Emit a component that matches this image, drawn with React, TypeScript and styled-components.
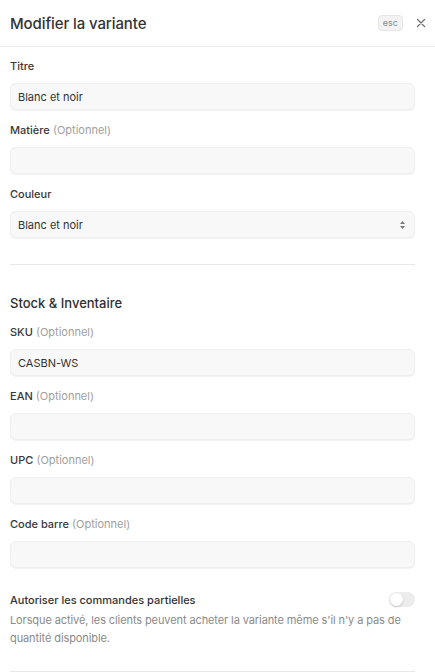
import React from "react";
import styled, { createGlobalStyle } from "styled-components";

const GlobalStyle = createGlobalStyle`
  * { box-sizing: border-box; }
  body {
    margin: 0;
    background: #ffffff;
    font-family: Inter, "Noto Sans", sans-serif;
    color: #2f2f2f;
    -webkit-font-smoothing: antialiased;
  }
`;

const Panel = styled.div`
  width: 435px;
  height: 672px;
  overflow: hidden;
  background: #fff;
`;

const Header = styled.header`
  height: 47px;
  display: flex;
  align-items: center;
  padding: 0 9px 0 10px;
  border-bottom: 1px solid #ececec;
`;

const Title = styled.h1`
  flex: 1;
  margin: 0;
  font-size: 15px;
  font-weight: 500;
  color: #333;
  letter-spacing: -0.1px;
`;

const Kbd = styled.span`
  font-size: 9px;
  color: #8a8a8a;
  background: #f3f3f3;
  border: 1px solid #e6e6e6;
  border-radius: 4px;
  padding: 1px 4px 2px;
  margin-right: 13px;
`;

const Close = styled.button`
  border: 0;
  background: none;
  padding: 0;
  width: 10px;
  height: 10px;
  display: flex;
  color: #6f6f6f;
`;

const Body = styled.div`
  padding: 12px 20px 0 10px;
`;

const Field = styled.div`
  margin-bottom: 13px;
`;

const Label = styled.label`
  display: block;
  font-size: 11px;
  line-height: 14px;
  font-weight: 500;
  color: #383838;
  margin-bottom: 10px;
`;

const Optional = styled.span`
  font-weight: 400;
  color: #a0a0a0;
`;

const Input = styled.div<{ $select?: boolean }>`
  height: 27px;
  display: flex;
  align-items: center;
  padding: 0 8px 0 7px;
  background: #f8f8f8;
  border: 1px solid #efefef;
  border-radius: 6px;
  box-shadow: 0 1px 1px rgba(0, 0, 0, 0.06);
  font-size: 11px;
  color: #333;
  justify-content: ${(p) => (p.$select ? "space-between" : "flex-start")};
`;

const Divider = styled.hr<{ $top: number }>`
  border: 0;
  border-top: 1px solid #e8e8e8;
  margin: ${(p) => p.$top}px 0 0;
`;

const SectionTitle = styled.h2`
  margin: 30px 0 14px;
  font-size: 13px;
  line-height: 16px;
  font-weight: 500;
  color: #2f2f2f;
`;

const ToggleRow = styled.div`
  margin-top: 24px;
`;

const ToggleHead = styled.div`
  display: flex;
  align-items: center;
  justify-content: space-between;
`;

const ToggleLabel = styled.span`
  font-size: 11px;
  line-height: 14px;
  font-weight: 500;
  color: #333;
`;

const Switch = styled.span`
  width: 26px;
  height: 15px;
  border-radius: 8px;
  background: #ececec;
  position: relative;
  &::after {
    content: "";
    position: absolute;
    left: 1px;
    top: 1px;
    width: 13px;
    height: 13px;
    border-radius: 50%;
    background: #fff;
    box-shadow: 0 1px 2px rgba(0, 0, 0, 0.2);
  }
`;

const Help = styled.p`
  margin: 4px 0 0;
  font-size: 11px;
  line-height: 18px;
  color: #8a8a8a;
  letter-spacing: -0.1px;
`;

const fields = [
  { label: "Titre", value: "Blanc et noir" },
  { label: "Matière", optional: true },
  { label: "Couleur", value: "Blanc et noir", select: true },
];

const stock = [
  { label: "SKU", optional: true, value: "CASBN-WS" },
  { label: "EAN", optional: true },
  { label: "UPC", optional: true },
  { label: "Code barre", optional: true },
];

type F = { label: string; value?: string; optional?: boolean; select?: boolean };

function FormField({ f }: { f: F }) {
  return (
    <Field>
      <Label>
        {f.label}
        {f.optional && <Optional> (Optionnel)</Optional>}
      </Label>
      <Input $select={f.select}>
        {f.value}
        {f.select && (
          <svg width="7" height="10" viewBox="0 0 7 10">
            <path d="M3.5 1 L6 4 H1 Z M3.5 9 L6 6 H1 Z" fill="#7a7a7a" />
          </svg>
        )}
      </Input>
    </Field>
  );
}

export default function App() {
  return (
    <Panel>
      <GlobalStyle />
      <Header>
        <Title>Modifier la variante</Title>
        <Kbd>esc</Kbd>
        <Close aria-label="Fermer">
          <svg width="10" height="10" viewBox="0 0 10 10">
            <path d="M1.5 1.5 L8.5 8.5 M8.5 1.5 L1.5 8.5" stroke="currentColor" strokeWidth="1.2" strokeLinecap="round" />
          </svg>
        </Close>
      </Header>
      <Body>
        {fields.map((f) => (
          <FormField key={f.label} f={f} />
        ))}
        <Divider $top={26} />
        <SectionTitle>Stock &amp; Inventaire</SectionTitle>
        {stock.map((f) => (
          <FormField key={f.label} f={f} />
        ))}
        <ToggleRow>
          <ToggleHead>
            <ToggleLabel>Autoriser les commandes partielles</ToggleLabel>
            <Switch />
          </ToggleHead>
          <Help>
            Lorsque activé, les clients peuvent acheter la variante même s'il n'y a pas de quantité disponible.
          </Help>
        </ToggleRow>
        <Divider $top={24} />
      </Body>
    </Panel>
  );
}
